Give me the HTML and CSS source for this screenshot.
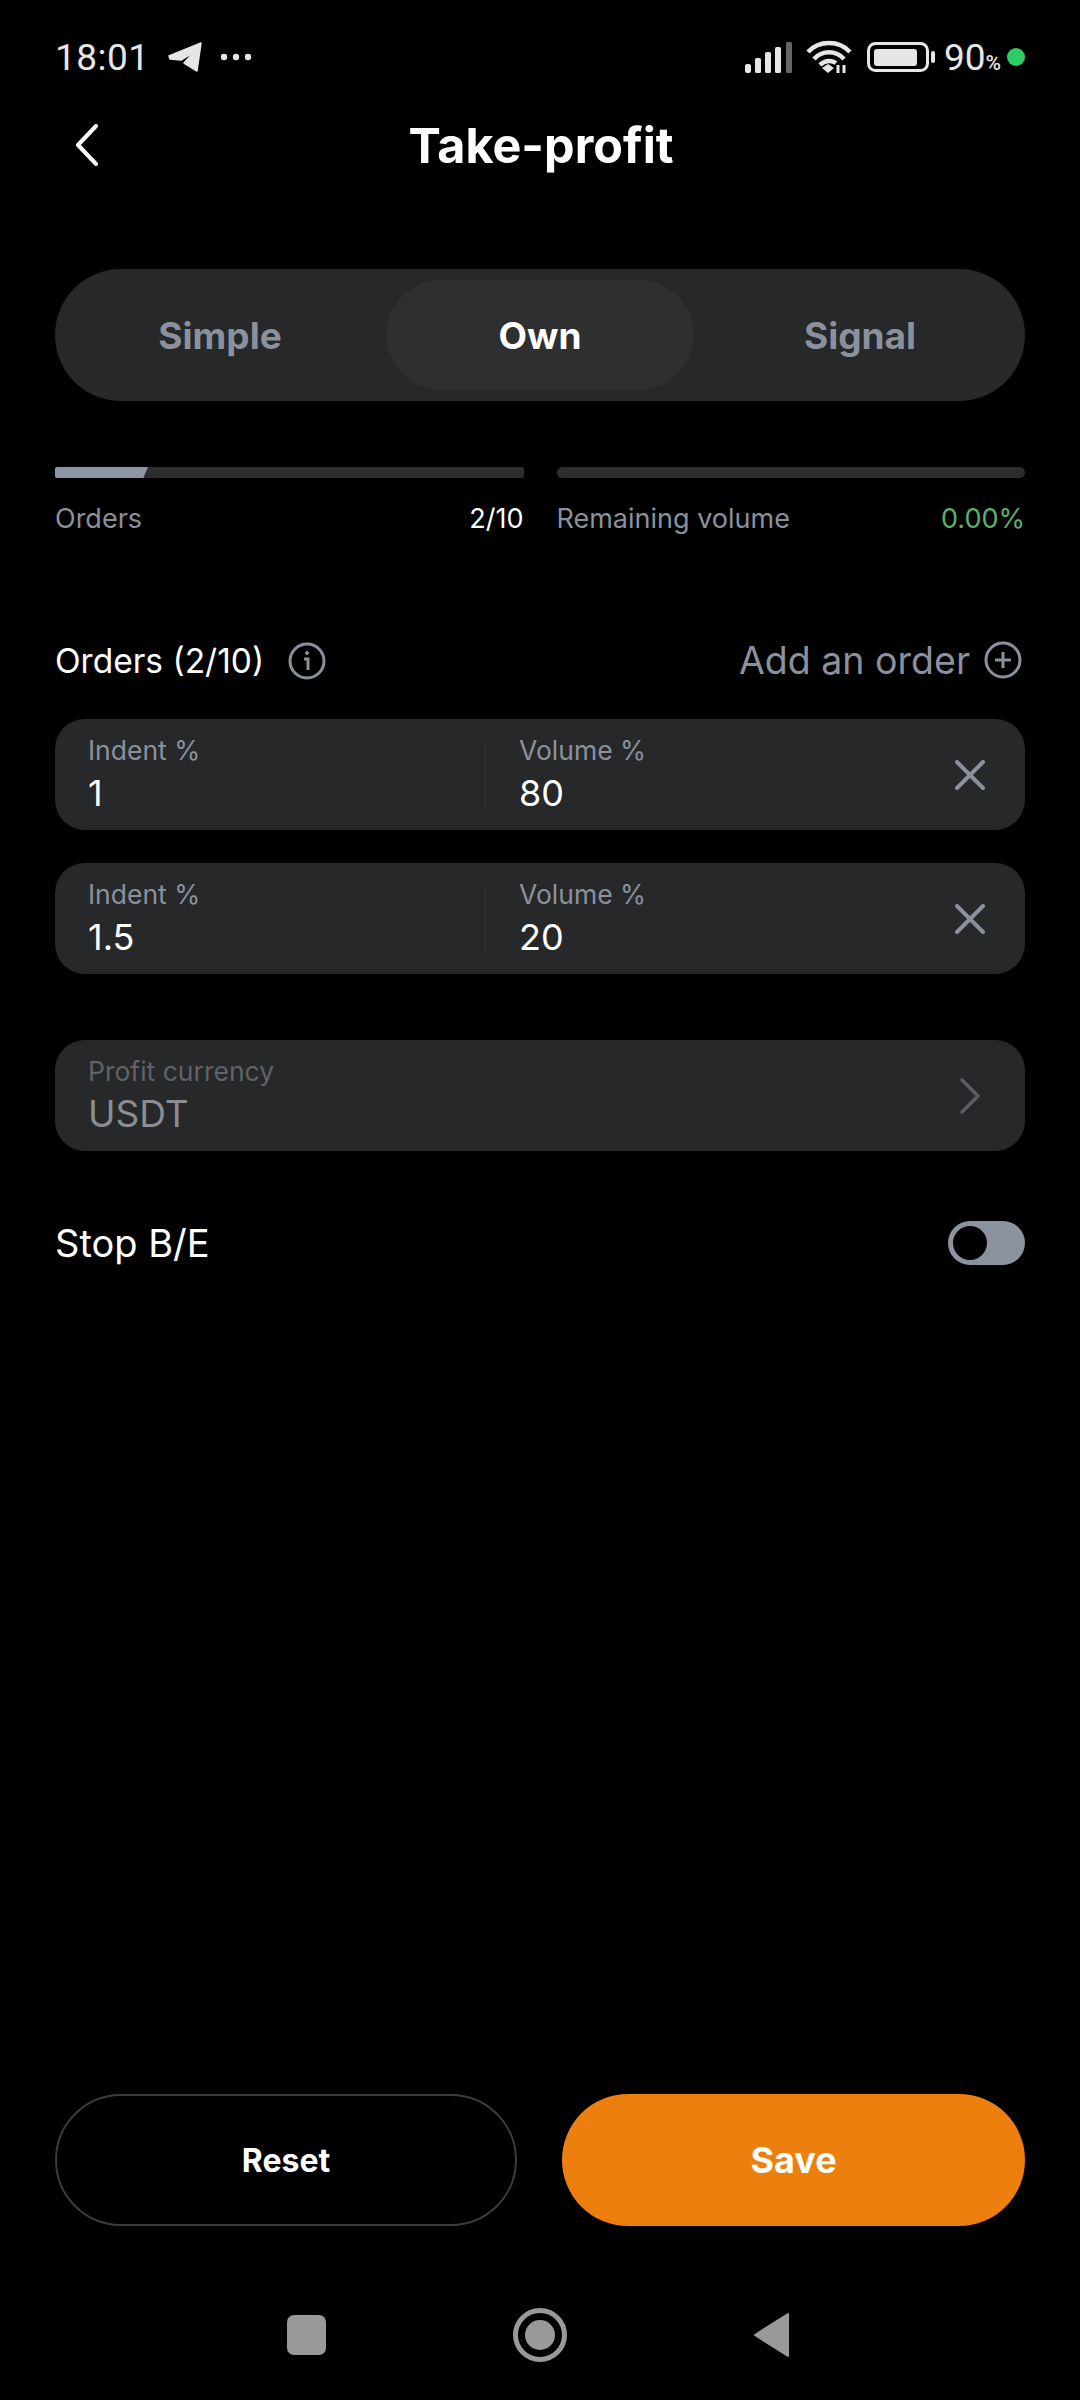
FILE: index.html
```html
<!DOCTYPE html>
<html lang="en">
<head>
    <meta charset="utf-8">
    <title>Take-profit</title>
    <link rel="stylesheet" href="styles.css">
</head>
<body>
    <div class="status">
        <div class="status-left">
            <span class="time">18:01</span>
            <svg class="tg" width="36" height="32" viewBox="0 0 36 32"><path d="M2 15 34 2 30 30 17 22 27 11 14 19 3 18Z" fill="#e6e6e6" stroke="#e6e6e6" stroke-width="1.5" stroke-linejoin="round"/></svg>
            <svg class="dots" width="32" height="8" viewBox="0 0 32 8"><circle cx="4" cy="4" r="3.2" fill="#e6e6e6"/><circle cx="16" cy="4" r="3.2" fill="#e6e6e6"/><circle cx="28" cy="4" r="3.2" fill="#e6e6e6"/></svg>
        </div>
        <div class="status-right">
            <svg width="48" height="31" viewBox="0 0 48 31"><rect x="0" y="22" width="6" height="9" rx="2" fill="#e6e6e6"/><rect x="10" y="16" width="6" height="15" rx="1.5" fill="#e6e6e6"/><rect x="20" y="10" width="6" height="21" rx="1.5" fill="#e6e6e6"/><rect x="30" y="5" width="6" height="26" rx="1.5" fill="#e6e6e6"/><rect x="41" y="0" width="6" height="31" rx="1.5" fill="#666"/></svg>
            <svg class="wifi" width="46" height="34" viewBox="0 0 46 34" fill="none" stroke="#e6e6e6" stroke-width="4.5"><path d="M2 12C13 0 33 0 44 12"/><path d="M8 19C16 10 30 10 38 19"/><path d="M14 25C19 20 26 20 30 23"/><path d="M16 28 22 24 28 28 22 33Z" fill="#e6e6e6" stroke="none"/><path d="M32 25V33M38 25V33" stroke-width="3"/></svg>
            <svg class="battery" width="69" height="31" viewBox="0 0 69 31"><rect x="1.5" y="1.5" width="59" height="27" rx="7" fill="none" stroke="#e6e6e6" stroke-width="3"/><rect x="7" y="7" width="43" height="17" rx="3" fill="#e6e6e6"/><rect x="64" y="9" width="4" height="12" rx="2" fill="#e6e6e6"/></svg>
            <span class="batt-num">90<small>%</small></span>
            <span class="green-dot"></span>
        </div>
    </div>

    <div class="header">
        <svg class="back" width="24" height="42" viewBox="0 0 24 42"><path d="M21 2 3 21 21 40" fill="none" stroke="#fff" stroke-width="4" stroke-linecap="round" stroke-linejoin="round"/></svg>
        <h1 class="title">Take-profit</h1>
    </div>

    <div class="content">
        <div class="tabs">
            <div class="tab">Simple</div>
            <div class="tab active">Own</div>
            <div class="tab">Signal</div>
        </div>

        <div class="meters">
            <div class="meter">
                <div class="bar"><div class="bar-fill"></div></div>
                <div class="meter-row"><span>Orders</span><span class="white">2/10</span></div>
            </div>
            <div class="meter">
                <div class="bar round"></div>
                <div class="meter-row"><span>Remaining volume</span><span class="green">0.00%</span></div>
            </div>
        </div>

        <div class="orders-head">
            <div class="orders-title">
                <span>Orders (2/10)</span>
                <svg width="38" height="38" viewBox="0 0 38 38" fill="none" stroke="#8b919c" stroke-width="3"><circle cx="19" cy="19" r="17"/><path d="M16 17H20V28"/><circle cx="19" cy="11" r="1.5" fill="#8b919c" stroke-width="1"/></svg>
            </div>
            <div class="add-order">
                <span>Add an order</span>
                <svg width="38" height="38" viewBox="0 0 38 38" fill="none" stroke="#8b919c" stroke-width="3"><circle cx="19" cy="19" r="17"/><path d="M19 11V27M11 19H27"/></svg>
            </div>
        </div>

        <div class="card">
            <div class="field first"><label>Indent %</label><div class="val">1</div></div>
            <div class="field"><label>Volume %</label><div class="val">80</div></div>
            <svg class="close" width="30" height="30" viewBox="0 0 30 30"><path d="M2 2 28 28M28 2 2 28" stroke="#8b919c" stroke-width="4" stroke-linecap="round"/></svg>
        </div>
        <div class="card second">
            <div class="field first"><label>Indent %</label><div class="val">1.5</div></div>
            <div class="field"><label>Volume %</label><div class="val">20</div></div>
            <svg class="close" width="30" height="30" viewBox="0 0 30 30"><path d="M2 2 28 28M28 2 2 28" stroke="#8b919c" stroke-width="4" stroke-linecap="round"/></svg>
        </div>

        <div class="card currency">
            <div class="field"><label>Profit currency</label><div class="val">USDT</div></div>
            <svg class="chev" width="20" height="36" viewBox="0 0 20 36"><path d="M2 2 18 18 2 34" fill="none" stroke="#5b5e63" stroke-width="3.5" stroke-linecap="round" stroke-linejoin="round"/></svg>
        </div>

        <div class="stop-row">
            <span>Stop B/E</span>
            <div class="toggle"><div class="knob"></div></div>
        </div>

        <div class="buttons">
            <div class="btn reset">Reset</div>
            <div class="btn save">Save</div>
        </div>
    </div>

    <div class="navbar">
        <div class="nav-square"></div>
        <div class="nav-circle"><div class="nav-dot"></div></div>
        <svg width="37" height="46" viewBox="0 0 37 46"><path d="M35 2V44L2 23Z" fill="#999" stroke="#999" stroke-width="2" stroke-linejoin="round"/></svg>
    </div>
</body>
</html>
```

FILE: styles.css
```css
* {
    box-sizing: border-box;
}
body {
    margin: 0;
    width: 1080px;
    height: 2400px;
    background: #000;
    color: #fff;
    font-family: Inter, "Noto Sans", sans-serif;
    display: flex;
    flex-direction: column;
}

/* status bar */
.status {
    height: 88px;
    padding: 26px 55px 0;
    display: flex;
    justify-content: space-between;
    align-items: center;
    color: #e6e6e6;
}
.status-left, .status-right {
    display: flex;
    align-items: center;
}
.time {
    font-family: Roboto, sans-serif;
    font-size: 37px;
    letter-spacing: 0.5px;
}
.tg {
    margin-left: 17px;
}
.dots {
    margin-left: 17px;
}
.wifi {
    margin-left: 13px;
}
.battery {
    margin-left: 15px;
}
.batt-num {
    font-family: Roboto, sans-serif;
    font-size: 37px;
    margin-left: 8px;
}
.batt-num small {
    font-size: 21px;
    font-weight: 500;
}
.green-dot {
    width: 18px;
    height: 18px;
    margin-left: 6px;
    border-radius: 50%;
    background: #2fcc66;
}

/* header */
.header {
    height: 114px;
    padding-left: 2px;
    position: relative;
    display: flex;
    justify-content: center;
    align-items: center;
}
.back {
    position: absolute;
    left: 75px;
    top: 36px;
}
.title {
    margin: 0;
    font-size: 48.5px;
    font-weight: 700;
}

.content {
    flex: 1;
    padding: 67px 55px 0;
    display: flex;
    flex-direction: column;
}

/* tabs */
.tabs {
    height: 132px;
    padding: 11px;
    gap: 12px;
    background: #26282a;
    border-radius: 66px;
    display: flex;
}
.tab {
    flex: 1;
    border-radius: 55px;
    display: flex;
    justify-content: center;
    align-items: center;
    font-size: 37px;
    font-weight: 700;
    color: #8b919c;
}
.tab.active {
    background: #2d2f31;
    color: #fff;
}

/* meters */
.meters {
    margin-top: 66px;
    display: flex;
    gap: 33px;
}
.meter {
    flex: 1;
}
.bar {
    height: 11px;
    background: #2b2d2f;
    overflow: hidden;
    border-radius: 2px;
}
.bar.round {
    border-radius: 6px;
}
.bar-fill {
    width: 93px;
    height: 11px;
    background: #8e96a3;
    clip-path: polygon(0 0, 100% 0, 95% 100%, 0 100%);
}
.meter-row {
    margin-top: 24px;
    display: flex;
    justify-content: space-between;
    font-size: 27px;
    line-height: 34px;
    color: #8b919c;
}
.white {
    color: #fff;
}
.green {
    color: #5cb06a;
}

/* orders */
.orders-head {
    margin-top: 102px;
    height: 44px;
    display: flex;
    justify-content: space-between;
    align-items: center;
}
.orders-title, .add-order {
    display: flex;
    align-items: center;
}
.orders-title {
    font-size: 33.5px;
    gap: 24px;
    padding-top: 2px;
}
.add-order {
    font-size: 37.5px;
    color: #8b919c;
    gap: 14px;
    padding-right: 3px;
}
.card {
    margin-top: 37px;
    height: 111px;
    padding: 0 33px;
    background: #26282a;
    border-radius: 30px;
    display: flex;
    align-items: center;
}
.card.second {
    margin-top: 33px;
}
.field {
    flex: 1;
}
.field.first {
    flex: none;
    width: 398px;
    margin-right: 33px;
    position: relative;
}
.field.first::after {
    content: "";
    position: absolute;
    right: 0;
    top: 6px;
    bottom: 6px;
    width: 1px;
    background: #2f3133;
}
.field label {
    display: block;
    font-size: 26.5px;
    line-height: 32px;
    color: #8b919c;
}
.val {
    margin-top: 5px;
    font-size: 36px;
    line-height: 44px;
}
.close {
    margin-right: 7px;
}
.currency {
    margin-top: 66px;
}
.currency label {
    color: #606368;
}
.currency .val {
    font-size: 37px;
    color: #8b8d90;
}
.chev {
    margin-right: 12px;
}
.stop-row {
    margin-top: 70px;
    height: 44px;
    display: flex;
    justify-content: space-between;
    align-items: center;
    font-size: 38px;
}
.toggle {
    width: 77px;
    height: 44px;
    border-radius: 22px;
    background: #8b93a0;
    padding: 5px;
}
.knob {
    width: 34px;
    height: 34px;
    border-radius: 50%;
    background: #000;
}

/* buttons */
.buttons {
    margin-top: auto;
    display: grid;
    grid-template-columns: 462px 1fr;
    gap: 45px;
}
.btn {
    height: 132px;
    border-radius: 66px;
    display: flex;
    justify-content: center;
    align-items: center;
    font-weight: 700;
}
.reset {
    border: 2px solid #3c3c3c;
    font-size: 32px;
}
.save {
    background: #ec7f0d;
    font-size: 36px;
}

/* nav bar */
.navbar {
    height: 174px;
    padding: 44px 290px 0 287px;
    display: flex;
    justify-content: space-between;
    align-items: center;
}
.nav-square {
    width: 39px;
    height: 40px;
    border-radius: 7px;
    background: #999;
}
.nav-circle {
    width: 54px;
    height: 54px;
    border: 5px solid #999;
    border-radius: 50%;
    display: flex;
    justify-content: center;
    align-items: center;
}
.nav-dot {
    width: 30px;
    height: 30px;
    border-radius: 50%;
    background: #999;
}
```
